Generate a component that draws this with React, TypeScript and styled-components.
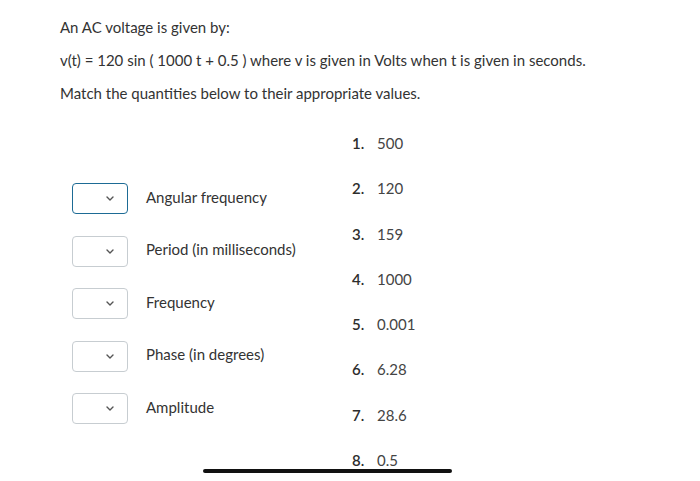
import styled, { createGlobalStyle } from "styled-components";

const GlobalStyle = createGlobalStyle`
  html, body {
    margin: 0;
    padding: 0;
    background: #fff;
  }
  body {
    font-family: Lato, "Open Sans", sans-serif;
    font-size: 15px;
    color: #333;
  }
`;

const Page = styled.div`
  position: relative;
  width: 700px;
  height: 481px;
  overflow: hidden;
  background: #fff;
`;

const Question = styled.div`
  padding: 17px 0 0 60px;
  display: flex;
  flex-direction: column;
  gap: 13px;
`;

const Line = styled.p`
  margin: 0;
  line-height: 20px;
  color: #333;
`;

const Match = styled.div`
  display: flex;
  margin-top: 30px;
`;

const Quantities = styled.div`
  width: 352px;
  padding: 50px 0 0 72px;
  box-sizing: border-box;
  display: flex;
  flex-direction: column;
  gap: 21.5px;
`;

const Row = styled.div`
  display: flex;
  align-items: center;
  gap: 18px;
`;

const Select = styled.div<{ $focused?: boolean }>`
  flex: none;
  width: 56px;
  height: 31px;
  box-sizing: border-box;
  border: 1px solid ${({ $focused }) => ($focused ? "#1d6b95" : "#c7cdd1")};
  border-radius: 4px;
  display: flex;
  align-items: center;
  justify-content: flex-end;
  padding-right: 13px;
`;

const Label = styled.span`
  line-height: 20px;
  margin-top: -4px;
  white-space: nowrap;
  color: #333;
`;

const Values = styled.ol`
  list-style: none;
  margin: 0;
  padding: 0;
  display: flex;
  flex-direction: column;
  gap: 25.3px;
`;

const Value = styled.li`
  display: flex;
  line-height: 20px;
`;

const Num = styled.span`
  width: 25px;
  color: #2d2d2d;
  font-weight: 600;
`;

const Amount = styled.span`
  color: #444;
`;

const HomeBar = styled.div`
  position: absolute;
  left: 203px;
  top: 469px;
  width: 249px;
  height: 4px;
  border-radius: 2px;
  background: #111;
`;

const Chevron = () => (
  <svg width="8" height="5" viewBox="0 0 8 5">
    <path
      d="M1 1 L4 4 L7 1"
      fill="none"
      stroke="#555"
      strokeWidth="1.4"
      strokeLinecap="round"
      strokeLinejoin="round"
    />
  </svg>
);

const quantities = [
  "Angular frequency",
  "Period (in milliseconds)",
  "Frequency",
  "Phase (in degrees)",
  "Amplitude",
];

const values = ["500", "120", "159", "1000", "0.001", "6.28", "28.6", "0.5"];

export default function App() {
  return (
    <Page>
      <GlobalStyle />
      <Question>
        <Line>An AC voltage is given by:</Line>
        <Line>
          v(t) = 120 sin ( 1000 t + 0.5 ) where v is given in Volts when t is
          given in seconds.
        </Line>
        <Line>Match the quantities below to their appropriate values.</Line>
      </Question>
      <Match>
        <Quantities>
          {quantities.map((q, i) => (
            <Row key={q}>
              <Select $focused={i === 0}>
                <Chevron />
              </Select>
              <Label>{q}</Label>
            </Row>
          ))}
        </Quantities>
        <Values>
          {values.map((v, i) => (
            <Value key={v}>
              <Num>{i + 1}.</Num>
              <Amount>{v}</Amount>
            </Value>
          ))}
        </Values>
      </Match>
      <HomeBar />
    </Page>
  );
}
